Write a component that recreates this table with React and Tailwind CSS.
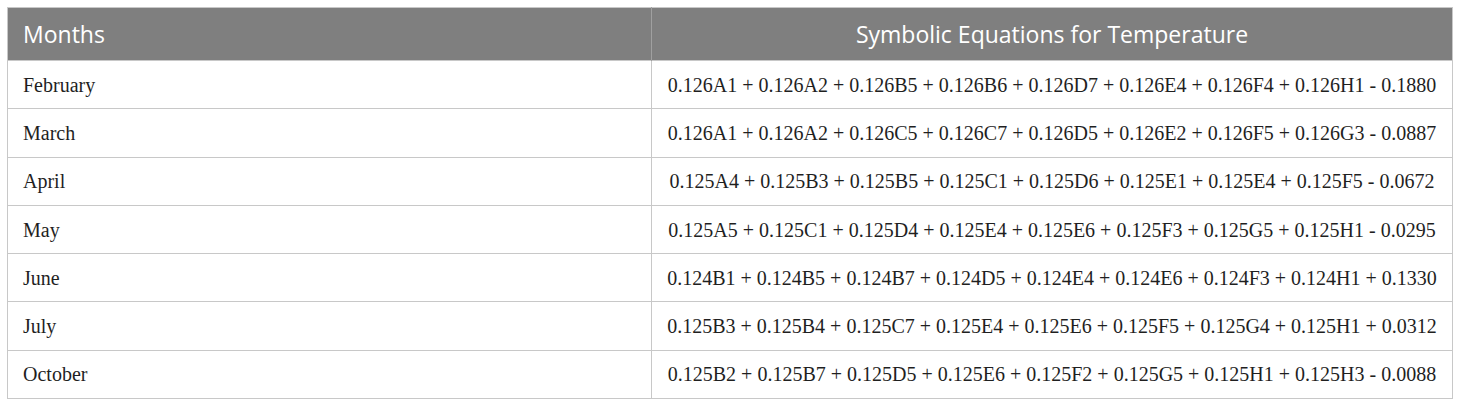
import React from "react";

const rows = [
  ["February", "0.126A1 + 0.126A2 + 0.126B5 + 0.126B6 + 0.126D7 + 0.126E4 + 0.126F4 + 0.126H1 - 0.1880"],
  ["March", "0.126A1 + 0.126A2 + 0.126C5 + 0.126C7 + 0.126D5 + 0.126E2 + 0.126F5 + 0.126G3 - 0.0887"],
  ["April", "0.125A4 + 0.125B3 + 0.125B5 + 0.125C1 + 0.125D6 + 0.125E1 + 0.125E4 + 0.125F5 - 0.0672"],
  ["May", "0.125A5 + 0.125C1 + 0.125D4 + 0.125E4 + 0.125E6 + 0.125F3 + 0.125G5 + 0.125H1 - 0.0295"],
  ["June", "0.124B1 + 0.124B5 + 0.124B7 + 0.124D5 + 0.124E4 + 0.124E6 + 0.124F3 + 0.124H1 + 0.1330"],
  ["July", "0.125B3 + 0.125B4 + 0.125C7 + 0.125E4 + 0.125E6 + 0.125F5 + 0.125G4 + 0.125H1 + 0.0312"],
  ["October", "0.125B2 + 0.125B7 + 0.125D5 + 0.125E6 + 0.125F2 + 0.125G5 + 0.125H1 + 0.125H3 - 0.0088"],
];

export default function App() {
  return (
    <div className="bg-white w-[1460px] h-[406px] pt-[7px] pl-[7px]">
      <table className="border-collapse w-[1446px] border border-[#c8c8c8]">
        <thead>
          <tr className="bg-[#7f7f7f] h-[53px]">
            <th className="w-[644px] text-left font-normal text-white text-[23px] pl-[15px] border-r border-[#a0a0a0] [font-family:'Open_Sans',sans-serif]">
              Months
            </th>
            <th className="text-center font-normal text-white text-[23px] [font-family:'Open_Sans',sans-serif]">
              Symbolic Equations for Temperature
            </th>
          </tr>
        </thead>
        <tbody>
          {rows.map(([m, eq]) => (
            <tr key={m} className="h-[48.3px] border-t border-[#c8c8c8]">
              <td className="pl-[15px] text-[20px] text-[#1f1f1f] border-r border-[#c8c8c8] [font-family:'Liberation_Serif',serif]">
                {m}
              </td>
              <td className="text-center text-[20px] text-[#1f1f1f] whitespace-pre [font-family:'Liberation_Serif',serif]">
                {eq}
              </td>
            </tr>
          ))}
        </tbody>
      </table>
    </div>
  );
}
